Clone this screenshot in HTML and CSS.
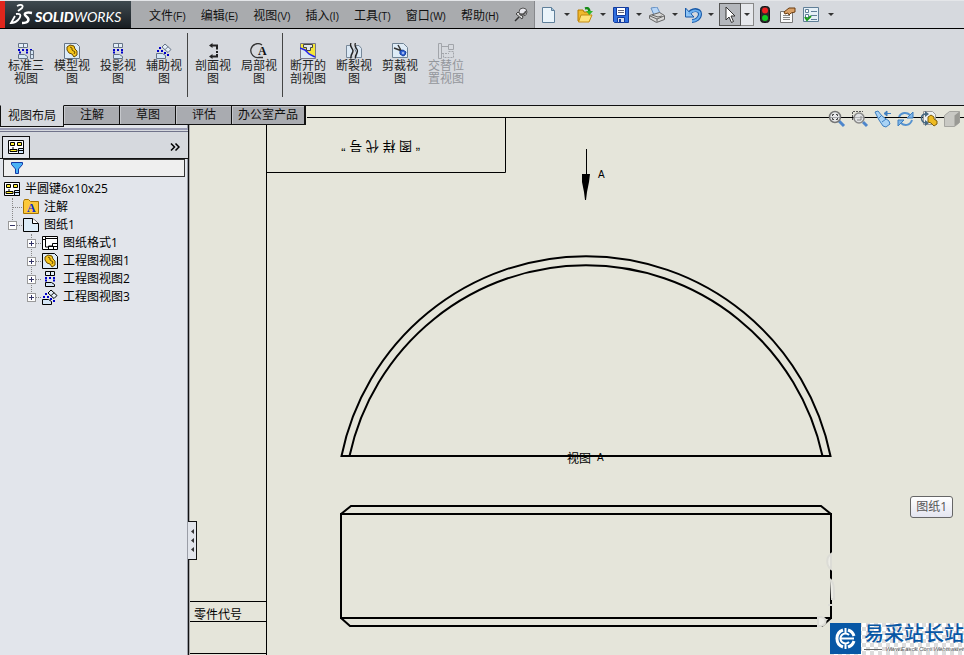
FILE: index.html
```html
<!DOCTYPE html>
<html lang="zh-CN">
<head>
    <meta charset="UTF-8">
    <meta name="viewport" content="width=device-width, initial-scale=1.0">
    <title>SolidWorks</title>
    <link rel="stylesheet" href="styles.css">
</head>
<body>
    <!-- shared icons -->
    <svg class="sprite" aria-hidden="true">
        <symbol id="i-drawing" viewBox="0 0 16 16">
            <path d="M.5 1.500h15v13h-15z" fill="#fff" stroke="#000"/>
            <path d="M2.500 3.500h4v3h-4zM9.500 3.500h4v3h-4z" fill="#fe3" stroke="#000"/>
            <path d="M5 8v3M2 12.500h7v-2H2z" fill="#fe3" stroke="#000"/>
            <path d="M10.500 9.500h5v5h-5zM10.500 11.500h5" fill="#cfe6ff" stroke="#000"/>
        </symbol>
        <symbol id="i-model" viewBox="0 0 16 16">
            <path d="M.5.500h12l3 3v12h-15z" fill="#dcebf8" stroke="currentColor"/>
            <path d="M3 4l3-2 4 1 1 3 2 2v4l-3 2-2-3-3-1-2-3z" fill="#f5c51c" stroke="#6b4b00"/>
            <path d="M6 4l2 1v2l3 2-1 2" fill="none" stroke="#6b4b00"/>
        </symbol>
        <symbol id="i-proj" viewBox="0 0 16 16">
            <path d="M3.500.500h9v4h-9zM8.500.500v4" fill="#e4eef8" stroke="currentColor"/>
            <path d="M3 7h2M7 7h2M11 7h2M3 9.500h2M11 9.500h2" stroke="#0000c8" stroke-width="2"/>
            <path d="M3.500 11.500h6l3 2v2h-9z" fill="#d5e6f6" stroke="currentColor"/>
        </symbol>
        <symbol id="i-aux" viewBox="0 0 16 16">
            <path d="M9 1l6 5.500-3 3-6-5.500zM12 3.700l-3 3" fill="#e4eef8" stroke="currentColor"/>
            <path d="M3 5h2M5 8h2M8 10h2M1 8h2M11 12h2" stroke="#0000c8" stroke-width="2"/>
            <path d="M.5 10.500h6l3 2v3h-9z" fill="#d5e6f6" stroke="currentColor"/>
        </symbol>
    </svg>

    <header class="topbar">
        <div class="brand">
            <svg width="24" height="22" viewBox="0 0 24 22" fill="none" stroke="#fff" stroke-width="2">
                <path d="M8 2c4-2 7-1 5 2L9 7M7 10c6-1 5 3 2 6-2 2-4 3-7 3l4-7" stroke-width="1.800"/>
                <path d="M23 9c-5-1-8 0-7 2 1 2 5 3 3 6-1 2-4 2-6 2" stroke-width="2.500"/>
            </svg>
            <span class="brand-name"><b>SOLID</b>WORKS</span>
        </div>
        <nav class="menu">
            <button>文件<small>(F)</small></button>
            <button>编辑<small>(E)</small></button>
            <button>视图<small>(V)</small></button>
            <button>插入<small>(I)</small></button>
            <button>工具<small>(T)</small></button>
            <button>窗口<small>(W)</small></button>
            <button>帮助<small>(H)</small></button>
            <button class="pin" aria-label="Pin">
                <svg width="14" height="16" viewBox="0 0 14 16">
                    <path d="M1 14l4-4" stroke="#333" stroke-width="1.500"/>
                    <path d="M2 7l6 5 1-2-5-5z" fill="#ddd" stroke="#444"/>
                    <circle cx="9" cy="5" r="4" fill="#e8e8ee" stroke="#555"/>
                    <path d="M6 7c3 1 5 0 6-3" stroke="#555" stroke-width="2" fill="none"/>
                </svg>
            </button>
        </nav>
        <div class="quickbar">
            <button class="tool" aria-label="New">
                <svg width="16" height="16" viewBox="0 0 16 16"><path d="M1.500.500h9l3 3v12h-12z" fill="#eaf4fb" stroke="#5f7f9a"/><path d="M10.500.500v3h3" fill="#9fc0d8" stroke="#5f7f9a"/></svg>
            </button>
            <button class="drop" aria-label="New options"></button>
            <button class="tool" aria-label="Open">
                <svg width="16" height="16" viewBox="0 0 16 16"><path d="M1 3h5l1 2h5v9H1z" fill="#f0b82c" stroke="#b67900"/><path d="M4 8h11l-3 7H1.500z" fill="#ffe27a" stroke="#c58c10"/><path d="M8 1.500c3-1 4 0 4.500 3" stroke="#168a16" stroke-width="2.500" fill="none"/><path d="M9 4h7l-3.500 4z" fill="#2eb52e"/></svg>
            </button>
            <button class="drop" aria-label="Open options"></button>
            <button class="tool" aria-label="Save">
                <svg width="16" height="16" viewBox="0 0 16 16"><path d="M.5.500h15v15h-14l-1-1z" fill="#2f6fe0" stroke="#123a9c"/><path d="M3.500.500h9v8h-9z" fill="#fff" stroke="#123a9c"/><path d="M5 3.500h6M5 5.500h6" stroke="#667"/><path d="M4.500 10.500h7v5h-7z" fill="#d5dceb" stroke="#123a9c"/><path d="M6 12h2v3H6z" fill="#123a9c"/></svg>
            </button>
            <button class="drop" aria-label="Save options"></button>
            <button class="tool" aria-label="Print">
                <svg width="16" height="16" viewBox="0 0 16 16"><path d="M2 1l6-1 3 6-6 2z" fill="#b8d6f7" stroke="#6590c4"/><path d="M.5 8.500l10-3 5 3v4l-8 3-7-4z" fill="#d8d8d8" stroke="#666"/><path d="M1 9l7 3 7-3M8 12v3M3 8l6 2 4-1" stroke="#666" fill="none"/></svg>
            </button>
            <button class="drop" aria-label="Print options"></button>
            <button class="tool" aria-label="Undo">
                <svg width="18" height="16" viewBox="0 0 18 16"><path d="M4 8c4-7 12-6 12-1 0 4-4 7-8 7" fill="none" stroke="#1759a8" stroke-width="4"/><path d="M1.500 1v9H10z" fill="#8ec4f5" stroke="#1759a8"/><path d="M5 7c4-5 11-4 11 0 0 4-4 7-8 7" fill="none" stroke="#6db0f0" stroke-width="2"/></svg>
            </button>
            <button class="drop" aria-label="Undo options"></button>
            <button class="tool pressed" aria-label="Select">
                <svg width="12" height="18" viewBox="0 0 12 18"><path d="M2 1v13l3-3 2.500 5.500 2-1L7 10h4z" fill="#fff" stroke="#333"/></svg>
            </button>
            <button class="drop boxed" aria-label="Select options"></button>
            <button class="tool wide" aria-label="Rebuild">
                <svg width="10" height="18" viewBox="0 0 10 18"><rect x=".5" y=".5" width="9" height="16" rx="3" fill="#2a2a2a" stroke="#111"/><circle cx="5" cy="4.500" r="3" fill="#e22"/><circle cx="5" cy="12" r="3" fill="#1c2"/></svg>
            </button>
            <button class="tool wide" aria-label="Properties">
                <svg width="16" height="16" viewBox="0 0 16 16"><path d="M.5 4.500h12v11H.5z" fill="#fafafa" stroke="#777"/><path d="M3 8.500h7M3 10.500h7M3 12.500h7" stroke="#888"/><path d="M4 5l5-4 6 0v4l-4 1-2 2-1-2-3 1z" fill="#d9a066" stroke="#6b3d10"/></svg>
            </button>
            <button class="tool wide" aria-label="Options">
                <svg width="16" height="16" viewBox="0 0 16 16"><path d="M.5.500h15v14H.5z" fill="#e6f0f7" stroke="#607f98"/><path d="M2.500 2.500h3v3h-3zM2.500 7.500h3v3h-3z" fill="#fff" stroke="#607f98"/><path d="M8 4.500h6M8 8.500h6M8 12.500h6" stroke="#607f98"/><path d="M2 10l2 3 4-4" stroke="#1a9a1a" stroke-width="2" fill="none"/></svg>
            </button>
            <button class="drop" aria-label="More options"></button>
        </div>
    </header>

    <section class="ribbon">
        <div class="group">
            <button class="cmd">
                <svg width="16" height="16" viewBox="0 0 16 16"><path d="M.5.500h9v4h-9zM5.500.500v4" fill="#e4eef8" stroke="#667486"/><path d="M0 7h2M4 7h2M8 7h2M12 7h2M1 9.500h2M8 9.500h2" stroke="#0000c8" stroke-width="2"/><path d="M.5 11.500h6l3 2v2h-9zM12.500 7.500h3v8h-3zM12.500 11.500h3" fill="#d5e6f6" stroke="#667486"/></svg>
                标准三视图
            </button>
            <button class="cmd"><svg width="16" height="16"><use href="#i-model"/></svg>模型视图</button>
            <button class="cmd"><svg width="16" height="16"><use href="#i-proj"/></svg>投影视图</button>
            <button class="cmd"><svg width="16" height="16"><use href="#i-aux"/></svg>辅助视图</button>
        </div>
        <div class="group">
            <button class="cmd">
                <svg width="16" height="16" viewBox="0 0 16 16"><path d="M6 2.500h6v4M12 8v2M12 11v2.500H6" fill="none" stroke="#222" stroke-width="2"/><path d="M4 2.500L7.500 0v5zM4 13.500L7.500 11v5z" fill="#222"/></svg>
                剖面视图
            </button>
            <button class="cmd">
                <svg width="18" height="16" viewBox="0 0 18 16"><path d="M12 2A7 7 0 1 0 9 14.500h4" fill="none" stroke="#333" stroke-width="1.300"/><text class="icon-a" x="8" y="12">A</text></svg>
                局部视图
            </button>
        </div>
        <div class="group">
            <button class="cmd">
                <svg width="16" height="16" viewBox="0 0 16 16"><path d="M.5.500h15v15H.5z" fill="#d9e6f2" stroke="#778"/><path d="M1 1h14v13L9 10 5 7 1 6z" fill="#f5e63a"/><path d="M3.500 1.500h9v3h-2v3h-4v-3h-3z" fill="#dfe6ec" stroke="#444"/><path d="M0 5l5 2 4 4 6 3" stroke="#22e" stroke-width="1.500" fill="none"/></svg>
                断开的剖视图
            </button>
            <button class="cmd">
                <svg width="16" height="16" viewBox="0 0 16 16"><path d="M.5 2.500H5l2 5-2 4 1 3H.5zM10 2.500h3l2.500 3v9H10l1-4-2-4z" fill="#dbe8f4" stroke="#778899"/><path d="M5 0C3 4 7 5 7 8s-3 4-2 7.500M9.500 0c-2 4 2 5 2 8s-3 4-2 7.500" fill="none" stroke="#222" stroke-width="1.300"/></svg>
                断裂视图
            </button>
            <button class="cmd">
                <svg width="16" height="16" viewBox="0 0 16 16"><path d="M.5.500h11l4 4v10H.5z" fill="#deebf6" stroke="#6f8294"/><path d="M2 5l8 3M6 2l4 7" stroke="#333" stroke-width="1.500"/><path d="M8 8l3-1 3 2-1 3-2 1-3-2z" fill="#3868d8" stroke="#123a9c"/><path d="M10 10h2" stroke="#fff"/></svg>
                剪裁视图
            </button>
            <button class="cmd" disabled>
                <svg width="16" height="16" viewBox="0 0 16 16" fill="none" stroke="#a2a5aa"><path d="M.5.500h3v15h-3zM3.500 3.500h7M10.500 1.500h5v5h-5z"/><path d="M4 10.500h7M10.500 8.500h5v6h-10v-4" stroke-dasharray="2 1"/></svg>
                交替位置视图
            </button>
        </div>
    </section>

    <main class="workspace">
        <nav class="tabs">
            <button class="tab active">视图布局</button>
            <button class="tab">注解</button>
            <button class="tab">草图</button>
            <button class="tab">评估</button>
            <button class="tab">办公室产品</button>
        </nav>

        <aside class="panel">
            <div class="panel-head">
                <button class="panel-tab" aria-label="FeatureManager"><svg width="16" height="16"><use href="#i-drawing"/></svg></button>
                <button class="expand" aria-label="Expand">
                    <svg width="10" height="8" viewBox="0 0 10 8"><path d="M1 .5L4.500 4 1 7.500M5.500.5L9 4 5.500 7.500" fill="none" stroke="#000" stroke-width="1.500"/></svg>
                </button>
            </div>
            <label class="filter">
                <svg width="12" height="12" viewBox="0 0 12 12"><path d="M.5.500h11v2L7.500 7v4.500h-3V7l-4-4.500z" fill="#49b2f5" stroke="#1238a8"/></svg>
                <input type="text" aria-label="Filter">
            </label>
            <ul class="tree">
                <li class="row"><svg width="16" height="16"><use href="#i-drawing"/></svg>半圆键6x10x25</li>
                <li class="row level1">
                    <svg width="16" height="16" viewBox="0 0 16 16"><path d="M.5 2.500l1-2h4l2 2h8v12H.5z" fill="#fcc93a" stroke="#a87400"/><text class="icon-a blue" x="4" y="13">A</text></svg>注解
                </li>
                <li class="row level1">
                    <span class="toggle open"></span>
                    <svg width="16" height="16" viewBox="0 0 16 16"><path d="M.5 1.500h9l6 5v8H.5z" fill="#dcecf8" stroke="#000"/><path d="M9.500 1.500v5h6" fill="#fff" stroke="#000"/></svg>图纸1
                </li>
                <li class="row level2">
                    <span class="toggle"></span>
                    <svg width="16" height="16" viewBox="0 0 16 16"><path d="M.5 1.500h15v13H.5z" fill="#fff" stroke="#000"/><path d="M3.500 1v11H7M0 4.500h4M3 3.500h12M6.500 14v-3h4V8.500h5M7 11.500h8M11.500 11v3" fill="none" stroke="#000"/></svg>图纸格式1
                </li>
                <li class="row level2"><span class="toggle"></span><svg width="16" height="16"><use href="#i-model"/></svg>工程图视图1</li>
                <li class="row level2"><span class="toggle"></span><svg width="16" height="16"><use href="#i-proj"/></svg>工程图视图2</li>
                <li class="row level2"><span class="toggle"></span><svg width="16" height="16"><use href="#i-aux"/></svg>工程图视图3</li>
            </ul>
            <button class="splitter" aria-label="Collapse panel">
                <svg width="3" height="23" viewBox="0 0 3 23"><path d="M3 0v5L0 2.500zM3 9v5l-3-2.500zM3 18v5l-3-2.500z" fill="#333"/></svg>
            </button>
        </aside>

        <section class="canvas">
            <svg class="sheet" width="100%" height="100%">
                <!-- sheet frame -->
                <g class="thin">
                    <path d="M118 11.500H2000M77.500 0v2000M77 66.500h239.500V11.500"/>
                    <path d="M0 495.500h77M0 515.500h77M0 547.500h77"/>
                </g>
                <text class="cad" x="5" y="513">零件代号</text>
                <text class="cad large" transform="translate(231 36) rotate(180)">“ 图 样 代 号 ”</text>
                <!-- section arrow -->
                <path class="thin" d="M397.500 43v26"/>
                <path d="M393 68h8l-1 8-2 10-1 8h-1l-1-8-2-10z"/>
                <text class="cad-letter" x="409" y="72">A</text>
                <!-- half round key, front view -->
                <g class="thick">
                    <path d="M152.500 350A249.500 249.500 0 0 1 641.500 350z"/>
                    <path d="M160.500 350A242 242 0 0 1 633.500 350"/>
                </g>
                <text class="cad" x="378" y="357">视图</text>
                <text class="cad-letter" x="408" y="355">A</text>
                <!-- half round key, top view -->
                <g class="thick">
                    <path d="M152 408h490v104H152z"/>
                </g>
                <path class="thick" d="M152 408l10-8h470l10 8M152 512l9 8h472l9-8"/>
                <g class="ghost">
                    <path d="M642 448c-5 3-5 12 0 15zM641 473c4 4 4 7 4 20h-3M639 499h5"/>
                    <path d="M629 511v9h3c6-2 6-8 0-9z"/>
                </g>
            </svg>

            <div class="view-tools">
                <button aria-label="Zoom to fit"><svg width="18" height="18" viewBox="0 0 18 18"><path d="M11 11l5 5" stroke="#4d86cc" stroke-width="3"/><circle cx="7" cy="7" r="5.500" fill="#e8eaf0" fill-opacity=".7" stroke="#777" stroke-width="1.500"/><path d="M4.500 6V4.500H6M8 4.500h1.500V6M9.500 8v1.500H8M6 9.500H4.500V8" fill="none" stroke="#444"/></svg></button>
                <button aria-label="Zoom to area"><svg width="18" height="18" viewBox="0 0 18 18"><path d="M1.500 10V1.500H12" fill="none" stroke="#555" stroke-dasharray="2 1"/><path d="M12 12l4 4" stroke="#4d86cc" stroke-width="3"/><circle cx="8" cy="8" r="5" fill="#e0e2e6" fill-opacity=".8" stroke="#888" stroke-width="1.500"/><path d="M6 10h4V6" fill="none" stroke="#888"/></svg></button>
                <button aria-label="Previous view"><svg width="18" height="18" viewBox="0 0 18 18"><path d="M1 2l3-1 4 5 7 5 1 3-4 3-3-1-4-6z" fill="#a9d3f5" stroke="#3e7fc0"/><path d="M5 8l3-3M8 12l4-3" stroke="#3e7fc0"/><path d="M11 3.500h6M10 3.500L13 1v5z" fill="#3e7fc0" stroke="#3e7fc0"/></svg></button>
                <button aria-label="Rotate view"><svg width="18" height="18" viewBox="0 0 18 18"><path d="M2 7c2-5 8-5 11-2M15 10c-2 6-8 6-11 3" fill="none" stroke="#5592cf" stroke-width="2"/><path d="M16 2v6h-6zM1 16v-6h6z" fill="#7fb6e8" stroke="#3e7fc0"/></svg></button>
                <button aria-label="3D drawing view"><svg width="18" height="18" viewBox="0 0 18 18"><path d="M3.500 1.500h9l3 3v10h-12z" fill="#eef1f2" stroke="#999"/><path d="M6 4c-6 0-6 8 0 9" fill="none" stroke="#46677f" stroke-width="1.500"/><path d="M5 1l4 3-4 3zM5 10l4 3-4 3z" fill="#46677f"/><path d="M8 7l3-2 3 2v2l3 2v3l-3 2-3-3-3-1z" fill="#eebb22" stroke="#80600a"/></svg></button>
                <button aria-label="Display style"><svg width="18" height="18" viewBox="0 0 18 18"><path d="M1.500 5.500l5-4h10v11l-5 4h-10z" fill="#c9c9c4" stroke="#a5a5a0"/><path d="M11.500 5.500l5-4v11l-5 4z" fill="#999994"/></svg></button>
            </div>

            <div class="tooltip">图纸1</div>

            <div class="watermark">
                <svg width="31" height="31" viewBox="0 0 31 31"><path d="M0 0h31v31H0z" fill="#0757a5"/><path d="M13 7a9 9 0 0 0 0 17M18 7a9 9 0 0 1 6 6M24 18a9 9 0 0 1-6 6" fill="none" stroke="#fff" stroke-width="3"/><path d="M19 12a5 5 0 1 0 0 7M11 15.500h13M15.500 5v5M15.500 21v5" fill="none" stroke="#fff" stroke-width="2"/></svg>
                <div class="mark-text">
                    <span class="mark-name">易采站长站</span>
                    <span class="mark-url">Www.Easck.Com Webmaster</span>
                </div>
            </div>
        </section>
    </main>
</body>
</html>
```
FILE: styles.css
```css
* {
    box-sizing: border-box;
}
body {
    margin: 0;
    height: 100vh;
    display: flex;
    flex-direction: column;
    overflow: hidden;
    font-family: "Liberation Sans", "Noto Sans CJK SC", sans-serif;
    font-size: 12px;
    color: #111;
    background: #d6d9de;
}
button {
    margin: 0;
    padding: 0;
    border: 0;
    background: none;
    font: inherit;
    color: inherit;
}
svg {
    flex: none;
}
.sprite {
    position: absolute;
    width: 0;
    height: 0;
}

/* top bar */
.topbar {
    flex: none;
    display: flex;
    height: 29px;
    border-top: 1px solid #e4e6e9;
    border-bottom: 1px solid #000;
}
.brand {
    display: flex;
    align-items: center;
    gap: 2px;
    width: 131px;
    padding-left: 4px;
    border-left: 5px solid #e0261c;
    background: linear-gradient(#3f4a50, #181d22);
    color: #fff;
}
.brand-name {
    padding-top: 4px;
    font-family: Lato, sans-serif;
    font-size: 14px;
    font-style: italic;
}
.brand-name b {
    font-weight: 900;
}
.menu {
    display: flex;
    align-items: center;
    gap: 15px;
    padding: 0 6px 0 18px;
    background: #a9abae;
    border-right: 1px solid #86888c;
}
.menu button {
    white-space: nowrap;
}
.menu small {
    font-size: 10px;
}
.pin svg {
    display: block;
}
.quickbar {
    flex: 1;
    display: flex;
    align-items: center;
    padding-left: 4px;
}
.tool {
    display: flex;
    align-items: center;
    justify-content: center;
    width: 20px;
    height: 23px;
}
.tool.wide {
    width: 23px;
}
.drop {
    display: flex;
    align-items: center;
    justify-content: center;
    width: 16px;
    height: 23px;
}
.drop::after {
    content: "";
    border: 3px solid transparent;
    border-top-color: #333;
    border-bottom: 0;
}
.pressed {
    width: 22px;
    background: #b4b7bc;
    border: 1px solid #555;
}
.boxed {
    width: 13px;
    background: #e6e8ec;
    border: 1px solid #888;
    border-left: 0;
}

/* ribbon */
.ribbon {
    flex: none;
    display: flex;
    height: 77px;
    padding: 4px 0 8px 3px;
    border-bottom: 1px solid #111;
}
.group {
    display: flex;
}
.group + .group {
    padding-left: 2px;
    border-left: 1px solid #444;
}
.cmd {
    display: flex;
    flex-direction: column;
    align-items: center;
    gap: 1px;
    width: 46px;
    padding: 10px 4px 0;
    line-height: 13px;
    color: #222;
}
.cmd svg {
    color: #667486;
}
.cmd:disabled {
    color: #93969b;
}
.icon-a {
    font: bold 12px "Liberation Serif", serif;
    fill: #111;
}
.icon-a.blue {
    fill: #0a2fd0;
}

/* workspace */
.workspace {
    position: relative;
    flex: 1;
    display: flex;
    min-height: 0;
}
.tabs {
    position: absolute;
    z-index: 2;
    top: -1px;
    left: 0;
    display: flex;
    align-items: flex-start;
}
.tab {
    height: 20px;
    padding: 0 15px 0 16px;
    line-height: 17px;
    background: #a9abb0;
    border: 1px solid #111;
    border-left-width: 0;
    box-shadow: inset 1px 1px #c6c8cc;
}
.tab:last-child {
    padding: 0 6px;
    border-right-width: 2px;
}
.tab.active {
    height: 22px;
    padding: 0 7px;
    background: #d6d9de;
    border-top-color: #d6d9de;
    border-left: 1px solid #111;
    box-shadow: none;
}

/* side panel */
.panel {
    position: relative;
    z-index: 1;
    flex: none;
    width: 189px;
    padding-top: 22px;
    background: #e2e5eb;
    border-right: 1px solid #111;
    box-shadow: inset -1px 0 #9a9da6, 1px 0 #aaa;
}
.panel-head {
    display: flex;
    align-items: flex-end;
    justify-content: space-between;
    height: 31px;
    padding: 0 8px 0 2px;
    background: linear-gradient(#9a9cb4 2px, #d6d9de 2px, #d6d9de 3px, #70738a 3px, #70738a 4px, #d6d9de 4px);
    border-bottom: 1px solid #111;
}
.panel-tab {
    width: 28px;
    height: 22px;
    padding: 2px 5px 4px;
    border: 1px solid #111;
    border-bottom: 0;
    background: #e2e5eb;
}
.panel-tab svg {
    display: block;
}
.expand {
    display: flex;
    align-items: center;
    height: 22px;
}
.filter {
    display: flex;
    align-items: center;
    gap: 4px;
    height: 18px;
    margin: 0 3px;
    padding-left: 7px;
    border: 1px solid #333;
    background: #efefef;
}
.filter input {
    flex: 1;
    min-width: 0;
    height: 14px;
    border: 0;
    outline: 0;
    background: none;
    font: inherit;
}
.tree {
    margin: 0;
    padding: 3px 0 0 4px;
    list-style: none;
    font-family: "Open Sans", "Noto Sans CJK SC", sans-serif;
    line-height: 16px;
    color: #000;
}
.row {
    position: relative;
    display: flex;
    align-items: center;
    gap: 5px;
    height: 18px;
    white-space: nowrap;
}
.level1 {
    padding-left: 19px;
}
.level2 {
    padding-left: 38px;
}
/* dotted connectors */
.level1::before,
.level2::before {
    content: "";
    position: absolute;
    top: 0;
    left: 8px;
    width: 9px;
    height: 9px;
    border-left: 1px dotted #888;
    border-bottom: 1px dotted #888;
}
.level2::before {
    left: 27px;
}
.level1 + .level1::before,
.level2 + .level2::before {
    top: -9px;
    height: 18px;
}
.toggle {
    position: absolute;
    z-index: 1;
    left: 4px;
    width: 9px;
    height: 9px;
    border: 1px solid #999;
    background: linear-gradient(#336, #336) center / 5px 1px no-repeat, linear-gradient(#336, #336) center / 1px 5px no-repeat, #fff;
}
.level2 .toggle {
    left: 23px;
}
.toggle.open {
    background: linear-gradient(#336, #336) center / 5px 1px no-repeat, #fff;
}
.splitter {
    position: absolute;
    top: 415px;
    right: -9px;
    display: flex;
    align-items: center;
    justify-content: center;
    width: 9px;
    height: 39px;
    border: 1px solid #111;
    border-left: 0;
    background: #e2e5eb;
}

/* drawing canvas */
.canvas {
    position: relative;
    flex: 1;
    min-width: 0;
    background: #e5e5da;
}
.sheet {
    position: absolute;
    inset: 0;
    overflow: hidden;
}
.thin {
    fill: none;
    stroke: #000;
}
.thick {
    fill: none;
    stroke: #000;
    stroke-width: 2px;
}
.ghost {
    fill: #ecece6;
    stroke: #dcdcd6;
    stroke-width: 2px;
}
.cad {
    font-family: "Liberation Sans", "Noto Sans CJK SC", sans-serif;
    font-size: 12px;
}
.cad.large {
    font-size: 13px;
}
.cad-letter {
    font-family: "Liberation Sans", sans-serif;
    font-size: 10px;
}
.view-tools {
    position: absolute;
    top: 4px;
    right: 3px;
    display: flex;
    gap: 5px;
}
.view-tools svg {
    display: block;
}
.tooltip {
    position: absolute;
    right: 11px;
    bottom: 137px;
    padding: 0 5px;
    border: 1px solid #666;
    border-radius: 3px;
    background: linear-gradient(#fff, #e4e5f0);
    font-family: "Open Sans", "Noto Sans CJK SC", sans-serif;
    line-height: 20px;
    color: #555;
}
.watermark {
    position: absolute;
    right: 0;
    bottom: 0;
    display: flex;
    padding-bottom: 1px;
    background: repeating-conic-gradient(#dcdcdc 0 25%, #fff 0 50%) 0 0 / 8px 8px;
}
.mark-text {
    display: flex;
    flex-direction: column;
    padding-left: 3px;
}
.mark-name {
    font-size: 20px;
    font-weight: 500;
    line-height: 23px;
    color: #0757a5;
}
.mark-url {
    display: flex;
    align-items: center;
    gap: 3px;
    font-size: 6px;
    font-style: italic;
    line-height: 7px;
    color: #555;
}
.mark-url::before {
    content: "";
    flex: 1;
    height: 1px;
    background: #666;
}
```
